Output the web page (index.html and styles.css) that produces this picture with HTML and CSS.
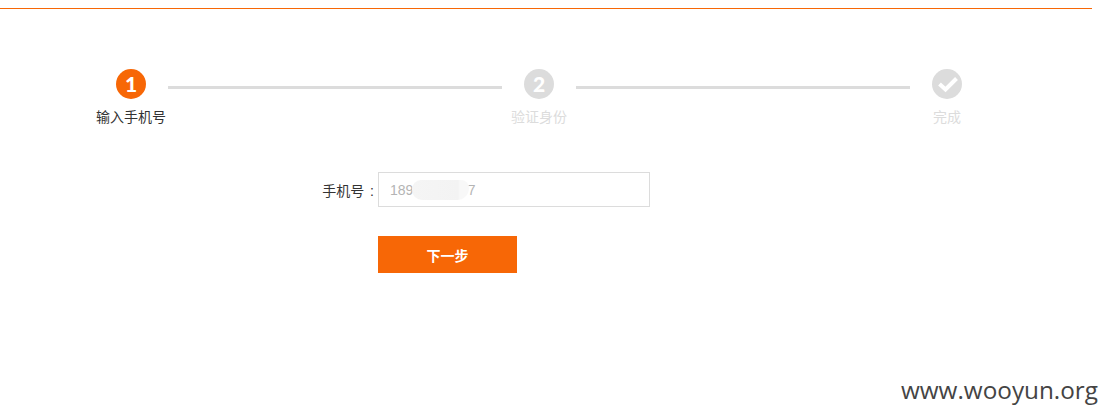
FILE: index.html
```html
<!DOCTYPE html>
<html>
<head>
	<meta charset="utf-8">
	<title>输入手机号</title>
	<link rel="stylesheet" href="styles.css">
</head>
<body>
	<div class="page">
		<div class="steps">
			<div class="step active">
				<div class="circle">1</div>
				<div class="step-name">输入手机号</div>
			</div>
			<div class="step-line"></div>
			<div class="step">
				<div class="circle">2</div>
				<div class="step-name">验证身份</div>
			</div>
			<div class="step-line"></div>
			<div class="step">
				<div class="circle">
					<svg width="30" height="30" viewBox="0 0 30 30">
						<path d="M7.5 15 L13.5 20.5 L24.5 9.5" fill="none" stroke="#fff" stroke-width="4"/>
					</svg>
				</div>
				<div class="step-name">完成</div>
			</div>
		</div>

		<div class="form-row">
			<label class="form-label" for="phone">手机号 :</label>
			<div class="input-wrap">
				<input id="phone" class="phone-input" type="text" value="189              7">
				<span class="smudge"></span>
			</div>
		</div>
		<div class="button-row">
			<button class="next-btn">下一步</button>
		</div>
	</div>
	<div class="watermark">www.wooyun.org</div>
</body>
</html>
```

FILE: styles.css
```css
body {
	margin: 0;
	height: 419px;
	overflow: hidden;
	position: relative;
	background-color: #fff;
	font-family: "Liberation Sans", "Noto Sans CJK SC", sans-serif;
	font-size: 14px;
	color: #333;
}

.page {
	width: 1092px;
	margin-top: 8px;
	border-top: 1px solid #f76706;
}

.steps {
	display: flex;
	align-items: flex-start;
	gap: 2px;
	padding: 60px 0 0 96px;
}

.step {
	width: 70px;
	display: flex;
	flex-direction: column;
	align-items: center;
}

.circle {
	width: 30px;
	height: 30px;
	border-radius: 50%;
	background-color: #dcdcdc;
	color: #fff;
	font-family: "Lato", sans-serif;
	font-size: 21px;
	font-weight: 900;
	line-height: 30px;
	text-align: center;
}

.circle svg {
	display: block;
}

.step-name {
	margin-top: 8px;
	line-height: 20px;
	white-space: nowrap;
	color: #dcdcdc;
}

.step.active .circle {
	background-color: #f76706;
}

.step.active .step-name {
	color: #333;
}

.step-line {
	width: 334px;
	height: 3px;
	margin-top: 17px;
	background-color: #dcdcdc;
}

.form-row {
	display: flex;
	align-items: center;
	margin-top: 45px;
}

.form-label {
	box-sizing: border-box;
	width: 378px;
	padding-right: 4px;
	word-spacing: 2px;
	text-align: right;
	white-space: nowrap;
}

.input-wrap {
	position: relative;
}

.phone-input {
	display: block;
	box-sizing: border-box;
	width: 272px;
	height: 35px;
	padding: 0 11px;
	border: 1px solid #dcdcdc;
	outline: none;
	font-family: "Liberation Sans", sans-serif;
	font-size: 14px;
	color: #b4b4b4;
}

.smudge {
	position: absolute;
	left: 34px;
	top: 8px;
	width: 57px;
	height: 20px;
	border-radius: 9px 8px 12px 10px;
	background: linear-gradient(90deg, #f5f5f5 0, #f3f3f3 46px, #f8f8f8 48px);
}

.button-row {
	margin-top: 29px;
	padding-left: 378px;
}

.next-btn {
	display: block;
	width: 139px;
	height: 37px;
	border: none;
	background-color: #f76706;
	color: #fff;
	font-family: "Liberation Sans", "Noto Sans CJK SC", sans-serif;
	font-size: 14px;
	font-weight: bold;
	cursor: pointer;
}

.watermark {
	position: absolute;
	right: 9px;
	top: 373px;
	font-family: "Open Sans", sans-serif;
	font-size: 24.3px;
	line-height: 34px;
	color: #444;
}
```
